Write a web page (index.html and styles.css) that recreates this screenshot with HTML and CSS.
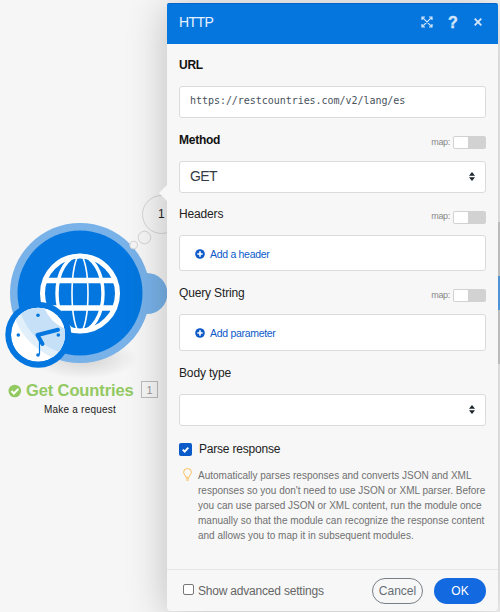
FILE: index.html
```html
<!DOCTYPE html>
<html lang="en">
<head>
<meta charset="utf-8">
<title>HTTP module</title>
<link rel="stylesheet" href="styles.css">
</head>
<body>
<div class="canvas">
  <svg class="diagram" width="500" height="612" viewBox="0 0 500 612">
    <defs>
      <radialGradient id="ground"><stop offset="0" stop-color="#000" stop-opacity=".15"/><stop offset="1" stop-color="#000" stop-opacity="0"/></radialGradient>
      <clipPath id="face"><circle cx="38" cy="334.700" r="27"/></clipPath>
    </defs>
    <ellipse cx="84" cy="358" rx="54" ry="21" fill="url(#ground)"/>
    <circle cx="147" cy="293.500" r="20.500" fill="#78b2e9"/>
    <circle cx="80" cy="293" r="70" fill="#78b2e9"/>
    <circle cx="80" cy="293" r="62.500" fill="#0377df"/>
    <g fill="none" stroke="#fff">
      <circle cx="80" cy="293.500" r="37.500" stroke-width="5"/>
      <ellipse cx="80" cy="293.500" rx="23" ry="38" stroke-width="3.400"/>
      <ellipse cx="80" cy="293.500" rx="8" ry="38" stroke-width="1.600"/>
      <path d="M44 280.500H116M44 308H116" stroke-width="5.400"/>
    </g>
    <circle cx="38.300" cy="334.700" r="33" fill="#0377df"/>
    <g clip-path="url(#face)">
      <circle cx="38" cy="334.700" r="27" fill="#fff"/>
      <circle cx="80" cy="293" r="70" fill="#e1effb"/>
      <circle cx="80" cy="293" r="62.500" fill="#c5e0f7"/>
      <circle cx="80" cy="293.500" r="38.500" fill="#fff"/>
    </g>
    <g fill="#0377df"><circle cx="38" cy="315.200" r="1.800"/><circle cx="18.300" cy="335" r="1.800"/><circle cx="58.300" cy="335" r="1.800"/><circle cx="38" cy="355" r="1.800"/></g>
    <g fill="none" stroke="#0377df" stroke-linecap="round" stroke-linejoin="round">
      <path d="M58 329.700 37.500 335 42.500 344" stroke-width="4"/>
      <path d="M39.500 337V354" stroke-width="1.200"/>
    </g>
    <g fill="#f5f5f5" stroke="#d4d4d4">
      <circle cx="161.500" cy="214.500" r="19"/>
      <circle cx="144.500" cy="237.500" r="6.300"/>
      <circle cx="133.700" cy="245" r="3.900"/>
    </g>
    <circle cx="14.800" cy="391" r="6.300" fill="#93c962"/>
    <path d="m11.500 391 2.400 2.500 4.500-4.600" fill="none" stroke="#fff" stroke-width="2"/>
  </svg>
  <span class="bubble-count">1</span>
  <strong class="module-name">Get Countries</strong>
  <span class="module-index">1</span>
  <span class="module-action">Make a request</span>
  <i class="edge"></i><i class="edge-node"></i>
</div>

<main class="panel">
  <i class="pointer"></i>
  <header class="head">
    <span class="title">HTTP</span>
    <svg class="tool" width="12" height="12" viewBox="0 0 12 12" fill="none" stroke="#d5e7fa" stroke-width="1.200"><path d="M1 4V1H4M8 1H11V4M11 8V11H8M4 11H1V8M1.300 1.300 10.700 10.700M10.700 1.300 1.300 10.700"/></svg>
    <span class="tool help-mark">?</span>
    <svg class="tool" width="8" height="8" viewBox="0 0 8 8" stroke="#d5e7fa" stroke-width="1.800"><path d="m.7.700 6.600 6.600M7.300.7.700 7.300"/></svg>
  </header>
  <section class="fields">
    <div class="label url"><b>URL</b></div>
    <div class="box mono">https://restcountries.com/v2/lang/es</div>
    <div class="label"><b>Method</b><span class="map">map:</span><i class="toggle"></i></div>
    <div class="box select"><span>GET</span><svg width="6" height="9" viewBox="0 0 6 9"><path d="M0 3.700 3 0l3 3.700zM0 5.300 3 9l3-3.700z" fill="#1c242c"/></svg></div>
    <div class="label headers"><span>Headers</span><span class="map">map:</span><i class="toggle"></i></div>
    <div class="box add"><svg width="10" height="10" viewBox="0 0 10 10"><circle cx="5" cy="5" r="4.800" fill="#0b5ac9"/><path d="M2.300 5H7.700M5 2.300V7.700" stroke="#fff" stroke-width="1.600"/></svg><span>Add a header</span></div>
    <div class="label"><span>Query String</span><span class="map">map:</span><i class="toggle"></i></div>
    <div class="box add tall"><svg width="10" height="10" viewBox="0 0 10 10"><circle cx="5" cy="5" r="4.800" fill="#0b5ac9"/><path d="M2.300 5H7.700M5 2.300V7.700" stroke="#fff" stroke-width="1.600"/></svg><span>Add parameter</span></div>
    <div class="label"><span>Body type</span></div>
    <div class="box select"><span></span><svg width="6" height="9" viewBox="0 0 6 9"><path d="M0 3.700 3 0l3 3.700zM0 5.300 3 9l3-3.700z" fill="#1c242c"/></svg></div>
    <div class="parse"><svg width="13" height="13" viewBox="0 0 13 13"><rect width="13" height="13" rx="2" fill="#0b5ac9"/><path d="m3.700 6.600 2 2 3.600-4" fill="none" stroke="#fff" stroke-width="1.900"/></svg><span class="parse-text">Parse response</span></div>
    <div class="hint">
      <svg width="9" height="13" viewBox="0 0 9 13" fill="none" stroke="#fbc05a"><path d="M2.900 9.300C2.900 7.400.6 6.700.6 4.200a3.900 3.700 0 0 1 7.800 0C8.400 6.700 6.100 7.400 6.100 9.300ZM2.900 10.800H6.100M3.400 12.200H5.600"/></svg>
      <p>Automatically parses responses and converts JSON and XML<br>responses so you don't need to use JSON or XML parser. Before<br>you can use parsed JSON or XML content, run the module once<br>manually so that the module can recognize the response content<br>and allows you to map it in subsequent modules.</p>
    </div>
  </section>
  <footer class="foot">
    <i class="check"></i><span class="advanced">Show advanced settings</span>
    <span class="btn cancel">Cancel</span><span class="btn ok">OK</span>
  </footer>
</main>
</body>
</html>
```
FILE: styles.css
```css
* { box-sizing: border-box; }
body {
  margin: 0;
  width: 500px;
  height: 612px;
  overflow: hidden;
  position: relative;
  padding: 3px 2px 0 167px;
  background: #f6f6f6;
  font: 12px "Liberation Sans", sans-serif;
  color: #222;
}
.canvas { position: absolute; inset: 0; }
.diagram { position: absolute; left: 0; top: 0; }
.bubble-count { position: absolute; left: 158px; top: 207px; font-size: 12px; line-height: 14px; }
.module-name { position: absolute; left: 26px; top: 380px; font-size: 16.5px; line-height: 20px; letter-spacing: -.12px; color: #93c962; white-space: nowrap; }
.module-index { position: absolute; left: 141px; top: 381px; width: 17px; height: 17px; border: 1px solid #bbb; color: #999; font-size: 11px; line-height: 16px; text-align: center; }
.module-action { position: absolute; left: 44px; top: 404px; font-size: 10px; line-height: 12px; letter-spacing: .22px; white-space: nowrap; }
.edge { position: absolute; right: 0; top: 222px; width: 2px; height: 142px; background: #bbb; z-index: 2; }
.edge-node { position: absolute; right: 0; top: 276px; width: 2px; height: 34px; background: #4d93d6; z-index: 2; }

.panel {
  position: relative;
  width: 331px;
  height: 608px;
  display: flex;
  flex-direction: column;
  background: #f7f7f7;
  border-radius: 2px 2px 4px 4px;
  box-shadow: 0 4px 40px rgba(0, 0, 0, .24);
}
.pointer { position: absolute; left: -8px; top: 182px; border: 8px solid transparent; border-left: 0; border-right-color: #f7f7f7; }
.head { height: 41px; padding: 0 16px 3px 12px; display: flex; align-items: center; background: #0676df; border-top: 1px solid #0565c6; border-radius: 2px 2px 0 0; color: #e8f2fd; }
.title { flex: 1; margin-top: -2px; font-size: 14px; letter-spacing: -.6px; }
.tool { flex: none; margin-top: -1px; }
.help-mark { width: 10px; margin: -1px 16px 0 15px; text-align: center; font: bold 16px/17px "Liberation Sans", sans-serif; color: #d5e7fa; -webkit-text-stroke: .4px #d5e7fa; }
.fields { padding: 0 12px; flex: 1; }
.label { height: 43px; display: flex; align-items: center; font-size: 12px; letter-spacing: -.15px; color: #222; }
.label.url, .label.headers { height: 42px; }
.label b { color: #111; letter-spacing: -.25px; }
.map { margin: 4px 3px 0 auto; font-size: 9px; letter-spacing: -.3px; color: #888; }
.toggle { width: 33px; height: 13px; margin-top: 6px; padding: 1px; border-radius: 2px; background: #d2d2d2; }
.toggle::before { content: ""; display: block; width: 14px; height: 11px; border-radius: 1px; background: #fff; }
.box { height: 32px; border: 1px solid #dbdbdb; border-radius: 3px; background: #fff; display: flex; align-items: center; }
.mono { padding: 0 10px 3px; font: 10px "DejaVu Sans Mono", monospace; letter-spacing: -.04px; color: #48525c; white-space: nowrap; }
.select { padding: 0 10px 2px; justify-content: space-between; font-size: 14px; color: #333c45; letter-spacing: -.6px; }
.add { height: 36px; padding: 1px 16px 0 15px; gap: 5px; font-size: 10.5px; letter-spacing: -.3px; color: #0b5ac9; }
.add.tall { height: 37px; }
.parse { height: 41px; display: flex; align-items: center; gap: 7px; padding-top: 5px; }
.parse-text { font-size: 12px; margin-top: -1px; letter-spacing: -.2px; }
.hint { display: flex; gap: 6px; padding-left: 4px; }
.hint svg { flex: none; margin-top: 1px; }
.hint p { margin: 1px 0 0; font-size: 10px; line-height: 15px; color: #707070; white-space: nowrap; }
.foot { height: 42px; flex: none; border-top: 1px solid #e6e6e6; padding: 0 12px 0 16px; display: flex; align-items: center; color: #666; }
.check { width: 11px; height: 11px; margin: 0 4px 3px 0; border: 1px solid #777; border-radius: 2px; background: #fff; }
.advanced { flex: 1; letter-spacing: -.2px; }
.btn { height: 26px; border-radius: 13px; display: flex; align-items: center; justify-content: center; font-size: 12px; }
.cancel { width: 51px; margin-right: 11px; border: 1px solid #777f87; color: #666e76; }
.ok { width: 52px; background: #136ae0; color: #fff; }
```
